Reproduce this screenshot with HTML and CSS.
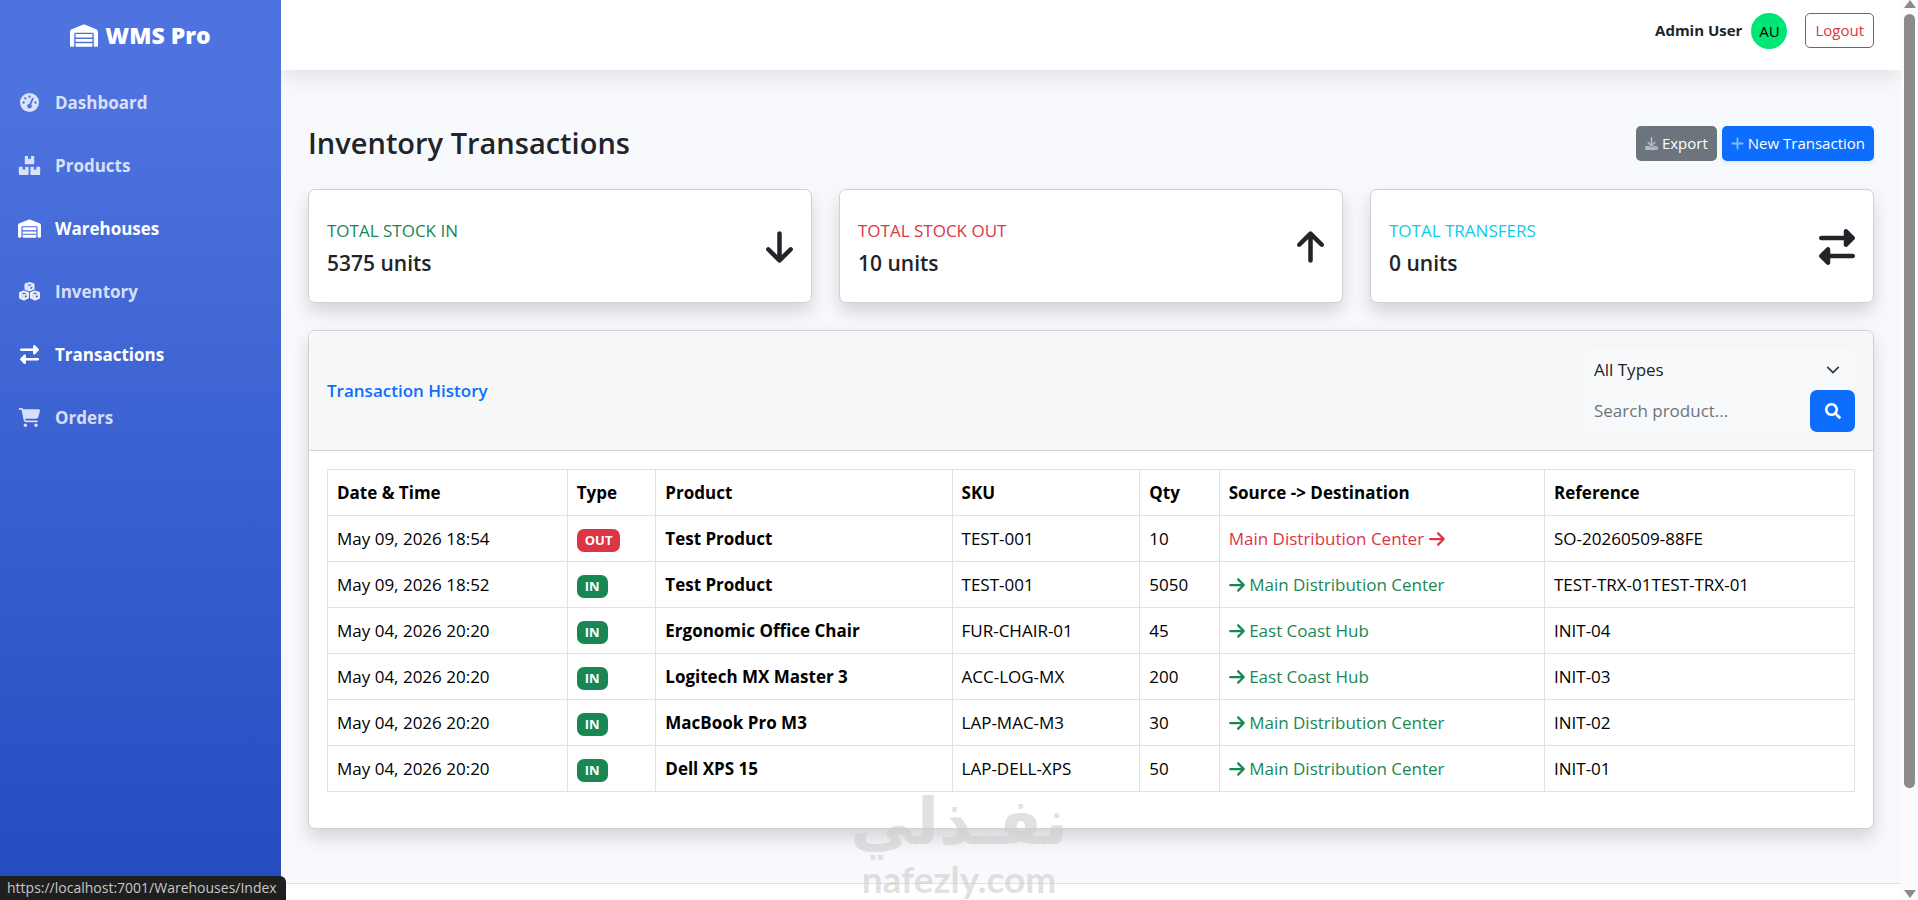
FILE: index.html
```
<!DOCTYPE html>
<html lang="en">

<head>
    <meta charset="utf-8">
    <title>Inventory Transactions - WMS Pro</title>
    <meta name="viewport" content="width=device-width,initial-scale=1">
    <link rel="stylesheet" href="styles.css">
</head>

<body>
    <svg class="sprite" aria-hidden="true">
        <symbol id="i-warehouse" viewBox="0 0 640 512">
            <path d="M0 488V171.3c0-26.2 15.9-49.7 40.2-59.4L308.1 4.8c7.6-3.1 16.1-3.1 23.8 0L599.8 111.9c24.3 9.7 40.2 33.3 40.2 59.4V488c0 13.3-10.7 24-24 24H568c-13.3 0-24-10.7-24-24V224c0-17.7-14.3-32-32-32H128c-17.7 0-32 14.3-32 32V488c0 13.3-10.7 24-24 24H24c-13.3 0-24-10.7-24-24zm488 24l-336 0c-13.3 0-24-10.7-24-24V432H512l0 56c0 13.3-10.7 24-24 24zM128 400V336H512v64H128zm0-96V224H512l0 80H128z" />
        </symbol>
        <symbol id="i-gauge" viewBox="0 0 512 512">
            <path fill-rule="evenodd" d="M0 256a256 256 0 1 1 512 0A256 256 0 1 1 0 256zM288 96a32 32 0 1 0-64 0 32 32 0 1 0 64 0zM256 416c35.3 0 64-28.7 64-64 0-17.4-6.9-33.1-18.1-44.6L366 161.7c5.3-12.1-.2-26.3-12.3-31.6s-26.3 .2-31.6 12.3L257.9 288H256c-35.3 0-64 28.7-64 64s28.7 64 64 64zM176 144a32 32 0 1 0-64 0 32 32 0 1 0 64 0zM96 288a32 32 0 1 0 0-64 32 32 0 1 0 0 64zM448 256a32 32 0 1 0-64 0 32 32 0 1 0 64 0z" />
        </symbol>
        <symbol id="i-boxes" viewBox="0 0 576 512">
            <path d="M248 0h-64c-13 0-24 11-24 24v176c0 13 11 24 24 24h208c13 0 24-11 24-24V24c0-13-11-24-24-24h-64v88l-40-18-40 18zM104 288H24c-13 0-24 11-24 24v176c0 13 11 24 24 24h216c13 0 24-11 24-24V312c0-13-11-24-24-24h-68v88l-34-18-34 18zM404 288h-68c-13 0-24 11-24 24v176c0 13 11 24 24 24h216c13 0 24-11 24-24V312c0-13-11-24-24-24h-80v88l-34-18-34 18z" />
        </symbol>
        <symbol id="i-cubes" viewBox="0 0 576 512">
            <g stroke="currentColor" stroke-width="48" stroke-linejoin="round">
                <path d="M288 24l112 42v118l-112 46-112-46V66z" />
                <path d="M140 250l112 42v130l-112 56-112-50V292z" />
                <path d="M436 250l112 42v136l-112 50-112-56V292z" />
            </g>
            <path class="cut" d="M288 56l58 22-58 22-58-22zM314 150l52-22v42l-52 24zM140 284l58 22-58 22-58-22zM166 378l52-22v44l-52 26zM436 284l58 22-58 22-58-22zM462 378l52-22v44l-52 26z" />
        </symbol>
        <symbol id="i-exchange" viewBox="0 0 512 512">
            <path d="M32 96l320 0V32c0-12.9 7.8-24.6 19.8-29.6s25.7-2.2 34.9 6.9l96 96c6 6 9.4 14.1 9.4 22.6s-3.4 16.6-9.4 22.6l-96 96c-9.2 9.2-22.9 11.9-34.9 6.9s-19.8-16.6-19.8-29.6V160L32 160c-17.7 0-32-14.3-32-32s14.3-32 32-32zM480 352c17.7 0 32 14.3 32 32s-14.3 32-32 32H160v64c0 12.9-7.8 24.6-19.8 29.6s-25.7 2.2-34.9-6.9l-96-96c-6-6-9.4-14.1-9.4-22.6s3.4-16.6 9.4-22.6l96-96c9.2-9.2 22.9-11.9 34.9-6.9s19.8 16.6 19.8 29.6l0 64H480z" />
        </symbol>
        <symbol id="i-cart" viewBox="0 0 576 512">
            <path d="M0 24C0 10.7 10.7 0 24 0H69.5c22 0 41.5 12.8 50.6 32h411c26.3 0 45.5 25 38.6 50.4l-41 152.3c-8.5 31.4-37 53.3-69.5 53.3H170.7l5.4 28.5c2.2 11.3 12.1 19.5 23.6 19.5H488c13.3 0 24 10.7 24 24s-10.7 24-24 24H199.7c-34.6 0-64.3-24.6-70.7-58.5L77.4 54.5c-.7-3.8-4-6.5-7.9-6.5H24C10.7 48 0 37.3 0 24zM128 464a48 48 0 1 1 96 0 48 48 0 1 1 -96 0zm336-48a48 48 0 1 1 0 96 48 48 0 1 1 0-96z" />
        </symbol>
        <symbol id="i-down" viewBox="0 0 384 512">
            <path d="M169.4 470.6c12.5 12.5 32.8 12.5 45.3 0l160-160c12.5-12.5 12.5-32.8 0-45.3s-32.8-12.5-45.3 0L224 370.8 224 64c0-17.7-14.3-32-32-32s-32 14.3-32 32l0 306.7L54.6 265.4c-12.5-12.5-32.8-12.5-45.3 0s-12.5 32.8 0 45.3l160 160z" />
        </symbol>
        <symbol id="i-up" viewBox="0 0 384 512">
            <path d="M214.6 41.4c-12.5-12.5-32.8-12.5-45.3 0l-160 160c-12.5 12.5-12.5 32.8 0 45.3s32.8 12.5 45.3 0L160 141.2V448c0 17.7 14.3 32 32 32s32-14.3 32-32V141.2L329.4 246.6c12.5 12.5 32.8 12.5 45.3 0s12.5-32.8 0-45.3l-160-160z" />
        </symbol>
        <symbol id="i-right" viewBox="0 0 448 512">
            <path d="M438.6 278.6c12.5-12.5 12.5-32.8 0-45.3l-160-160c-12.5-12.5-32.8-12.5-45.3 0s-12.5 32.8 0 45.3L338.8 224 32 224c-17.7 0-32 14.3-32 32s14.3 32 32 32l306.7 0L233.4 393.4c-12.5 12.5-12.5 32.8 0 45.3s32.8 12.5 45.3 0l160-160z" />
        </symbol>
        <symbol id="i-download" viewBox="0 0 512 512">
            <path d="M288 32c0-17.7-14.3-32-32-32s-32 14.3-32 32V274.7l-73.4-73.4c-12.5-12.5-32.8-12.5-45.3 0s-12.5 32.8 0 45.3l128 128c12.5 12.5 32.8 12.5 45.3 0l128-128c12.5-12.5 12.5-32.8 0-45.3s-32.8-12.5-45.3 0L288 274.7V32zM64 352c-35.3 0-64 28.7-64 64v32c0 35.3 28.7 64 64 64H448c35.3 0 64-28.7 64-64V416c0-35.3-28.7-64-64-64H346.5l-45.3 45.3c-25 25-65.5 25-90.5 0L165.5 352H64zm368 56a24 24 0 1 1 0 48 24 24 0 1 1 0-48z" />
        </symbol>
        <symbol id="i-plus" viewBox="0 0 448 512">
            <path d="M256 80c0-17.7-14.3-32-32-32s-32 14.3-32 32V224H48c-17.7 0-32 14.3-32 32s14.3 32 32 32H192V432c0 17.7 14.3 32 32 32s32-14.3 32-32V288H400c17.7 0 32-14.3 32-32s-14.3-32-32-32H256V80z" />
        </symbol>
        <symbol id="i-search" viewBox="0 0 512 512">
            <path d="M505 442.7L405.3 343c-4.5-4.5-10.6-7-17-7H372c27.6-35.3 44-79.7 44-128C416 93.1 322.9 0 208 0S0 93.1 0 208s93.1 208 208 208c48.3 0 92.7-16.4 128-44v16.3c0 6.4 2.5 12.5 7 17l99.7 99.7c9.4 9.4 24.6 9.4 33.9 0l28.3-28.3c9.4-9.4 9.4-24.6 .1-34zM208 336c-70.7 0-128-57.2-128-128 0-70.7 57.2-128 128-128 70.7 0 128 57.2 128 128 0 70.7-57.2 128-128 128z" />
        </symbol>
    </svg>

    <div class="wrapper">
        <nav class="sidebar">
            <a class="brand" href="#"><svg class="icon"><use href="#i-warehouse" /></svg>WMS Pro</a>
            <a class="nav-link" href="#"><svg class="icon"><use href="#i-gauge" /></svg>Dashboard</a>
            <a class="nav-link" href="#"><svg class="icon"><use href="#i-boxes" /></svg>Products</a>
            <a class="nav-link active" href="#"><svg class="icon"><use href="#i-warehouse" /></svg>Warehouses</a>
            <a class="nav-link" href="#"><svg class="icon"><use href="#i-cubes" /></svg>Inventory</a>
            <a class="nav-link active" href="#"><svg class="icon"><use href="#i-exchange" /></svg>Transactions</a>
            <a class="nav-link" href="#"><svg class="icon"><use href="#i-cart" /></svg>Orders</a>
        </nav>

        <div class="content">
            <header class="topbar">
                <span class="user-name">Admin User</span>
                <span class="avatar">AU</span>
                <button class="btn btn-outline" type="button">Logout</button>
            </header>

            <main class="main">
                <div class="page-head">
                    <h1>Inventory Transactions</h1>
                    <div class="actions">
                        <button class="btn btn-secondary" type="button"><svg class="icon"><use href="#i-download" /></svg>Export</button>
                        <button class="btn btn-primary" type="button"><svg class="icon"><use href="#i-plus" /></svg>New Transaction</button>
                    </div>
                </div>

                <div class="stats">
                    <div class="card stat">
                        <div>
                            <div class="stat-title success">TOTAL STOCK IN</div>
                            <div class="stat-value">5375 units</div>
                        </div>
                        <svg class="icon"><use href="#i-down" /></svg>
                    </div>
                    <div class="card stat">
                        <div>
                            <div class="stat-title danger">TOTAL STOCK OUT</div>
                            <div class="stat-value">10 units</div>
                        </div>
                        <svg class="icon"><use href="#i-up" /></svg>
                    </div>
                    <div class="card stat">
                        <div>
                            <div class="stat-title info">TOTAL TRANSFERS</div>
                            <div class="stat-value">0 units</div>
                        </div>
                        <svg class="icon wide"><use href="#i-exchange" /></svg>
                    </div>
                </div>

                <section class="card">
                    <div class="card-header">
                        <h2>Transaction History</h2>
                        <form class="filter">
                            <select class="field select" aria-label="Transaction type">
                                <option>All Types</option>
                                <option>In</option>
                                <option>Out</option>
                                <option>Transfer</option>
                            </select>
                            <div class="search">
                                <input class="field" type="text" placeholder="Search product..." aria-label="Search product">
                                <button class="btn-search" type="button" aria-label="Search"><svg class="icon"><use href="#i-search" /></svg></button>
                            </div>
                        </form>
                    </div>
                    <div class="card-body">
                        <table>
                            <colgroup>
                                <col class="c-date">
                                <col class="c-type">
                                <col class="c-product">
                                <col class="c-sku">
                                <col class="c-qty">
                                <col class="c-route">
                                <col class="c-ref">
                            </colgroup>
                            <thead>
                                <tr>
                                    <th>Date &amp; Time</th>
                                    <th>Type</th>
                                    <th>Product</th>
                                    <th>SKU</th>
                                    <th>Qty</th>
                                    <th>Source -&gt; Destination</th>
                                    <th>Reference</th>
                                </tr>
                            </thead>
                            <tbody>
                                <tr>
                                    <td>May 09, 2026 18:54</td>
                                    <td><span class="badge badge-out">OUT</span></td>
                                    <td><b>Test Product</b></td>
                                    <td>TEST-001</td>
                                    <td>10</td>
                                    <td class="danger">Main Distribution Center <svg class="icon"><use href="#i-right" /></svg></td>
                                    <td>SO-20260509-88FE</td>
                                </tr>
                                <tr>
                                    <td>May 09, 2026 18:52</td>
                                    <td><span class="badge">IN</span></td>
                                    <td><b>Test Product</b></td>
                                    <td>TEST-001</td>
                                    <td>5050</td>
                                    <td class="success"><svg class="icon"><use href="#i-right" /></svg> Main Distribution Center</td>
                                    <td>TEST-TRX-01TEST-TRX-01</td>
                                </tr>
                                <tr>
                                    <td>May 04, 2026 20:20</td>
                                    <td><span class="badge">IN</span></td>
                                    <td><b>Ergonomic Office Chair</b></td>
                                    <td>FUR-CHAIR-01</td>
                                    <td>45</td>
                                    <td class="success"><svg class="icon"><use href="#i-right" /></svg> East Coast Hub</td>
                                    <td>INIT-04</td>
                                </tr>
                                <tr>
                                    <td>May 04, 2026 20:20</td>
                                    <td><span class="badge">IN</span></td>
                                    <td><b>Logitech MX Master 3</b></td>
                                    <td>ACC-LOG-MX</td>
                                    <td>200</td>
                                    <td class="success"><svg class="icon"><use href="#i-right" /></svg> East Coast Hub</td>
                                    <td>INIT-03</td>
                                </tr>
                                <tr>
                                    <td>May 04, 2026 20:20</td>
                                    <td><span class="badge">IN</span></td>
                                    <td><b>MacBook Pro M3</b></td>
                                    <td>LAP-MAC-M3</td>
                                    <td>30</td>
                                    <td class="success"><svg class="icon"><use href="#i-right" /></svg> Main Distribution Center</td>
                                    <td>INIT-02</td>
                                </tr>
                                <tr>
                                    <td>May 04, 2026 20:20</td>
                                    <td><span class="badge">IN</span></td>
                                    <td><b>Dell XPS 15</b></td>
                                    <td>LAP-DELL-XPS</td>
                                    <td>50</td>
                                    <td class="success"><svg class="icon"><use href="#i-right" /></svg> Main Distribution Center</td>
                                    <td>INIT-01</td>
                                </tr>
                            </tbody>
                        </table>
                    </div>
                </section>
            </main>
            <footer class="footer"></footer>
        </div>

        <div class="scrollbar" aria-hidden="true">
            <svg class="scroll-arrow" viewBox="0 0 12 8"><path d="M6 0l6 8H0z" /></svg>
            <div class="thumb"></div>
            <svg class="scroll-arrow" viewBox="0 0 12 8"><path d="M0 0h12L6 8z" /></svg>
        </div>
    </div>

    <div class="watermark">
        <div class="wm-arabic" lang="ar" dir="rtl">نفـذلي</div>
        <div class="wm-latin">nafezly.com</div>
    </div>
    <div class="status">https://localhost:7001/Warehouses/Index</div>
</body>

</html>
```
FILE: styles.css
```
* {
    box-sizing: border-box;
}

body {
    margin: 0;
    font-family: "Open Sans", "Noto Sans", sans-serif;
    font-size: 17px;
    line-height: 27px;
    color: #212529;
    background: #f8f9fc;
}

h1,
h2 {
    margin: 0;
    font-weight: 600;
}

button,
input,
select {
    font: inherit;
}

.sprite {
    display: none;
}

.icon {
    width: 18px;
    height: 18px;
    fill: currentColor;
}

.cut {
    fill: #4468d8;
}

.wrapper {
    display: flex;
    height: 100vh;
    overflow: hidden;
}

/* sidebar */
.sidebar {
    flex: 0 0 281px;
    background: linear-gradient(180deg, #4e73df 10%, #224abe 104%);
    position: relative;
}

.brand {
    display: flex;
    align-items: center;
    justify-content: center;
    gap: 7px;
    height: 71px;
    color: #fff;
    font-size: 23px;
    font-weight: 800;
    text-decoration: none;
}

.brand .icon {
    width: 28px;
    height: 23px;
}

.nav-link {
    display: flex;
    align-items: center;
    gap: 14px;
    padding: 18px;
    color: rgba(255, 255, 255, .8);
    font-weight: 700;
    text-decoration: none;
}

.nav-link .icon {
    width: 23px;
    height: 19px;
}

.nav-link.active {
    color: #fff;
}

/* main column */
.content {
    flex: 1;
    min-width: 0;
    display: flex;
    flex-direction: column;
}

.topbar {
    display: flex;
    align-items: center;
    justify-content: flex-end;
    height: 70px;
    padding: 0 27px 9px;
    background: #fff;
    box-shadow: 0 9px 18px rgba(0, 0, 0, .08);
}

.user-name {
    margin-right: 9px;
    font-size: 15px;
    font-weight: 700;
}

.avatar {
    width: 36px;
    height: 36px;
    margin-right: 18px;
    border-radius: 50%;
    background: #00e676;
    color: #000;
    font-size: 15px;
    line-height: 36px;
    text-align: center;
}

.btn {
    display: inline-flex;
    align-items: center;
    gap: 4px;
    height: 35px;
    padding: 0 8px;
    border: 1px solid transparent;
    border-radius: 5px;
    color: #fff;
    font-size: 15px;
}

.btn .icon {
    width: 13px;
    height: 15px;
    opacity: .5;
}

.btn-outline {
    padding: 0 9px;
    border-color: #dc3545;
    background: #fff;
    color: #dc3545;
}

.btn-secondary {
    background: #6c757d;
}

.btn-primary {
    background: #0d6efd;
    box-shadow: 0 2px 4px rgba(0, 0, 0, .08);
}

.main {
    flex: 0 0 auto;
    padding: 54px 27px;
}

.page-head {
    display: flex;
    align-items: center;
    justify-content: space-between;
    margin-bottom: 27px;
}

.page-head h1 {
    font-size: 29px;
    line-height: 38px;
}

.actions {
    display: flex;
    gap: 5px;
}

.card {
    border: 1px solid #cfd1d3;
    border-radius: 7px;
    background: #fff;
    box-shadow: 0 9px 18px rgba(0, 0, 0, .15);
}

.stats {
    display: grid;
    grid-template-columns: repeat(3, 1fr);
    gap: 27px;
    margin-bottom: 27px;
}

.stat {
    display: flex;
    align-items: center;
    justify-content: space-between;
    padding: 27px 18px 26px;
}

.stat-title {
    margin-bottom: 6px;
}

.stat-value {
    font-size: 21px;
    font-weight: 600;
    line-height: 26px;
}

.stat .icon {
    width: 27px;
    height: 36px;
}

.stat .icon.wide {
    width: 36px;
}

.success {
    color: #198754;
}

.danger {
    color: #dc3545;
}

.info {
    color: #0dcaf0;
}

.card-header {
    display: flex;
    align-items: center;
    justify-content: space-between;
    padding: 18px;
    border-bottom: 1px solid #cfd1d3;
    border-radius: 6px 6px 0 0;
    background: #f7f7f7;
}

.card-header h2 {
    color: #0d6efd;
    font-size: 17px;
}

.filter {
    width: 272px;
}

.field {
    display: block;
    width: 100%;
    height: 41px;
    padding: 0 11px;
    border: 0;
    border-radius: 7px;
    background: #f8f9fa;
    color: #212529;
}

.field::placeholder {
    color: #6c757d;
    opacity: 1;
}

.select {
    appearance: none;
    background: #f8f9fa url("data:image/svg+xml,%3Csvg xmlns='http://www.w3.org/2000/svg' viewBox='0 0 16 16'%3E%3Cpath fill='none' stroke='%23343a40' stroke-linecap='round' stroke-linejoin='round' stroke-width='2' d='m2 5 6 6 6-6'/%3E%3C/svg%3E") no-repeat right 15px center / 14px;
}

.search {
    display: flex;
}

.btn-search {
    display: flex;
    align-items: center;
    justify-content: center;
    flex: 0 0 45px;
    height: 42px;
    padding: 0;
    border: 0;
    border-radius: 7px;
    background: #0d6efd;
    color: #fff;
}

.btn-search .icon {
    width: 16px;
    height: 16px;
}

.card-body {
    padding: 18px 18px 36px;
}

/* history table */
table {
    width: 100%;
    table-layout: fixed;
    border-collapse: collapse;
    color: #000;
}

th,
td {
    padding: 9px;
    border: 1px solid #dee2e6;
    text-align: left;
    white-space: nowrap;
}

td.success {
    color: #198754;
}

td.danger {
    color: #dc3545;
}

td .icon {
    width: 16px;
    vertical-align: -3px;
}

.c-date {
    width: 15.7%;
}

.c-type {
    width: 5.8%;
}

.c-product {
    width: 19.4%;
}

.c-sku {
    width: 12.3%;
}

.c-qty {
    width: 5.2%;
}

.c-route {
    width: 21.3%;
}

.badge {
    display: inline-block;
    padding: 5px 8px;
    border-radius: 7px;
    background: #198754;
    color: #fff;
    font-size: 13px;
    font-weight: 700;
    line-height: 13px;
    vertical-align: middle;
}

.badge-out {
    background: #dc3545;
}

.footer {
    flex: 1 0 17px;
    border-top: 1px solid #dee2e6;
    background: #fff;
}

.scrollbar {
    display: flex;
    flex: 0 0 17px;
    flex-direction: column;
    align-items: center;
    background: #fcfcfc;
}

.thumb {
    width: 11px;
    height: 86%;
    margin: 4px 0 auto;
    border-radius: 6px;
    background: #8b8b8b;
}

.scroll-arrow {
    width: 12px;
    height: 8px;
    margin-bottom: 2px;
    fill: #8b8b8b;
}

/* overlays */
.watermark {
    position: absolute;
    bottom: 0;
    left: 50%;
    width: 220px;
    margin-left: -110px;
    color: rgba(205, 205, 205, .6);
    font-weight: 700;
    text-align: center;
}

.wm-arabic {
    font-family: "DejaVu Sans", sans-serif;
    font-size: 64px;
    line-height: 72px;
}

.wm-latin {
    font-family: Lato, sans-serif;
    font-size: 37px;
    line-height: 42px;
}

.status {
    position: absolute;
    bottom: 0;
    left: 0;
    padding: 0 9px 0 7px;
    border-radius: 0 6px 0 0;
    background: #1f1f1f;
    color: #c7c7c7;
    font-size: 14px;
    line-height: 24px;
}
```
